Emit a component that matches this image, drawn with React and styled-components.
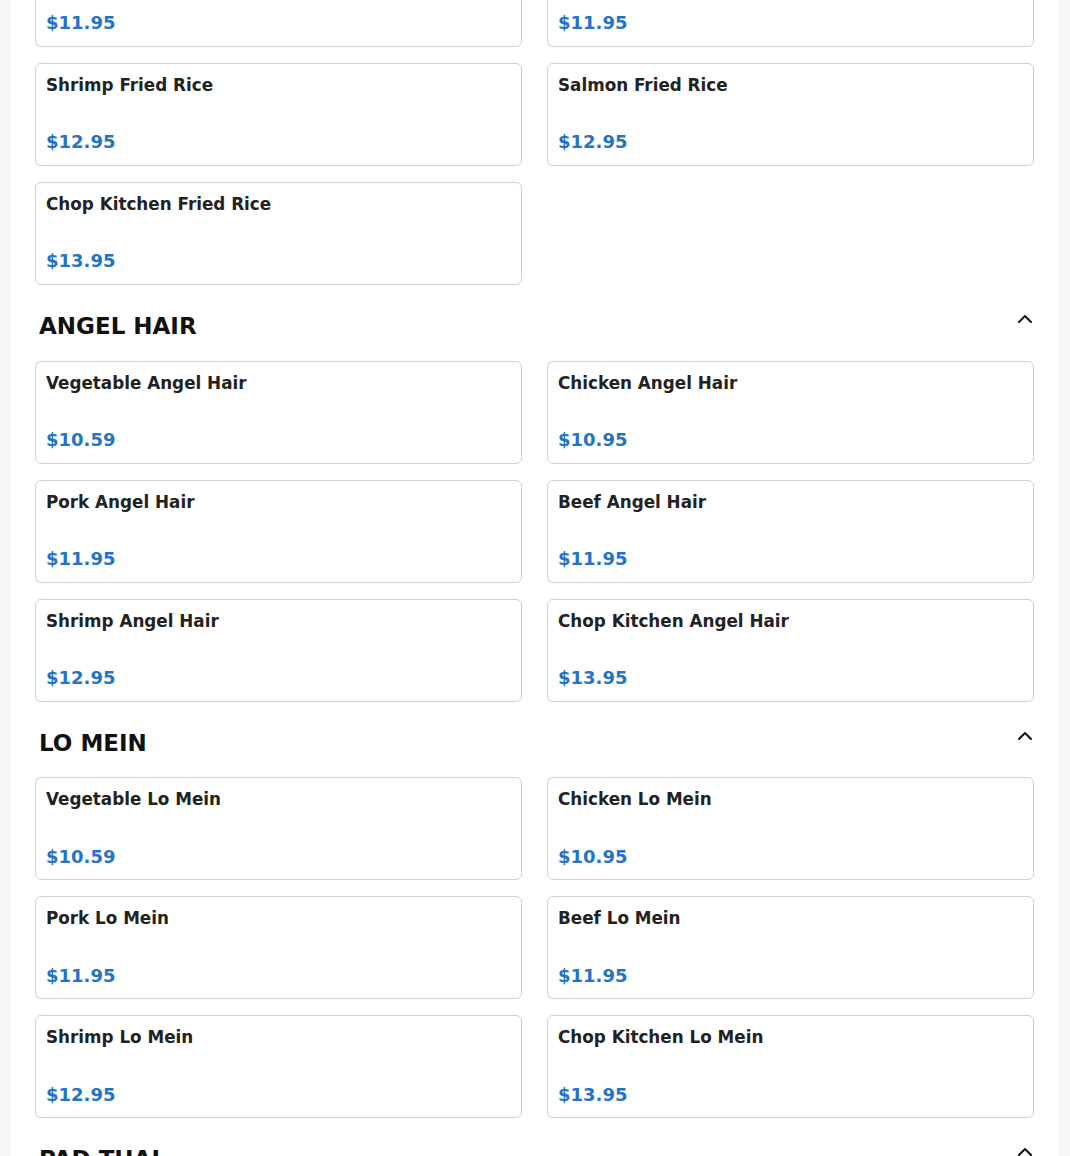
import React, { useState } from "react";
import styled, { createGlobalStyle } from "styled-components";
import { ChevronUp } from "lucide-react";

const GlobalStyle = createGlobalStyle`
  html, body {
    margin: 0;
    padding: 0;
    background: #f7f7f7;
    font-family: "DejaVu Sans", "Liberation Sans", sans-serif;
  }
`;

const Page = styled.div`
  width: 1048px;
  margin: 0 auto;
  background: #ffffff;
  padding: 0 25px 0 24px;
  box-sizing: border-box;
  overflow: hidden;
  height: 1156px;
`;

const Section = styled.section`
  display: flex;
  flex-direction: column;
`;

const SectionHeader = styled.div`
  display: flex;
  justify-content: space-between;
  align-items: flex-start;
  padding: 22px 0 0 4px;
  margin-bottom: 20px;
`;

const SectionTitle = styled.h2`
  margin: 6px 0 0;
  font-size: 23px;
  line-height: 27.6px;
  font-weight: 700;
  color: #111;
`;

const Toggle = styled.button`
  border: none;
  background: none;
  padding: 0;
  margin-right: -3px;
  display: flex;
  color: #111;
  cursor: pointer;
`;

const Grid = styled.div`
  display: grid;
  grid-template-columns: 1fr 1fr;
  column-gap: 25px;
  row-gap: 16px;
  margin-top: ${(p) => (p.$offset ? `${p.$offset}px` : "0")};
`;

const Card = styled.div`
  box-sizing: border-box;
  height: 103px;
  border: 1px solid #cfcfcf;
  border-radius: 6px;
  padding: 11px 10px 12px;
  display: flex;
  flex-direction: column;
  justify-content: space-between;
  background: #fff;
`;

const ItemName = styled.div`
  font-size: 16.8px;
  line-height: 20px;
  font-weight: 700;
  color: #222;
`;

const Price = styled.div`
  font-size: 18px;
  line-height: 21.6px;
  font-weight: 700;
  color: #2474c4;
`;

const menu = [
  {
    name: "FRIED RICE",
    hideHeader: true,
    offset: -56,
    items: [
      ["Pork Fried Rice", "$11.95"],
      ["Beef Fried Rice", "$11.95"],
      ["Shrimp Fried Rice", "$12.95"],
      ["Salmon Fried Rice", "$12.95"],
      ["Chop Kitchen Fried Rice", "$13.95"],
    ],
  },
  {
    name: "ANGEL HAIR",
    items: [
      ["Vegetable Angel Hair", "$10.59"],
      ["Chicken Angel Hair", "$10.95"],
      ["Pork Angel Hair", "$11.95"],
      ["Beef Angel Hair", "$11.95"],
      ["Shrimp Angel Hair", "$12.95"],
      ["Chop Kitchen Angel Hair", "$13.95"],
    ],
  },
  {
    name: "LO MEIN",
    items: [
      ["Vegetable Lo Mein", "$10.59"],
      ["Chicken Lo Mein", "$10.95"],
      ["Pork Lo Mein", "$11.95"],
      ["Beef Lo Mein", "$11.95"],
      ["Shrimp Lo Mein", "$12.95"],
      ["Chop Kitchen Lo Mein", "$13.95"],
    ],
  },
  {
    name: "PAD THAI",
    items: [
      ["Vegetable Pad Thai", "$10.59"],
      ["Chicken Pad Thai", "$10.95"],
    ],
  },
];

function MenuSection({ section }) {
  const [open, setOpen] = useState(true);
  return (
    <Section>
      {!section.hideHeader && (
        <SectionHeader>
          <SectionTitle>{section.name}</SectionTitle>
          <Toggle onClick={() => setOpen(!open)} aria-label="toggle">
            <ChevronUp size={24} strokeWidth={2} />
          </Toggle>
        </SectionHeader>
      )}
      {open && (
        <Grid $offset={section.offset}>
          {section.items.map(([name, price]) => (
            <Card key={name}>
              <ItemName>{name}</ItemName>
              <Price>{price}</Price>
            </Card>
          ))}
        </Grid>
      )}
    </Section>
  );
}

export default function App() {
  return (
    <>
      <GlobalStyle />
      <Page>
        {menu.map((s) => (
          <MenuSection key={s.name} section={s} />
        ))}
      </Page>
    </>
  );
}
